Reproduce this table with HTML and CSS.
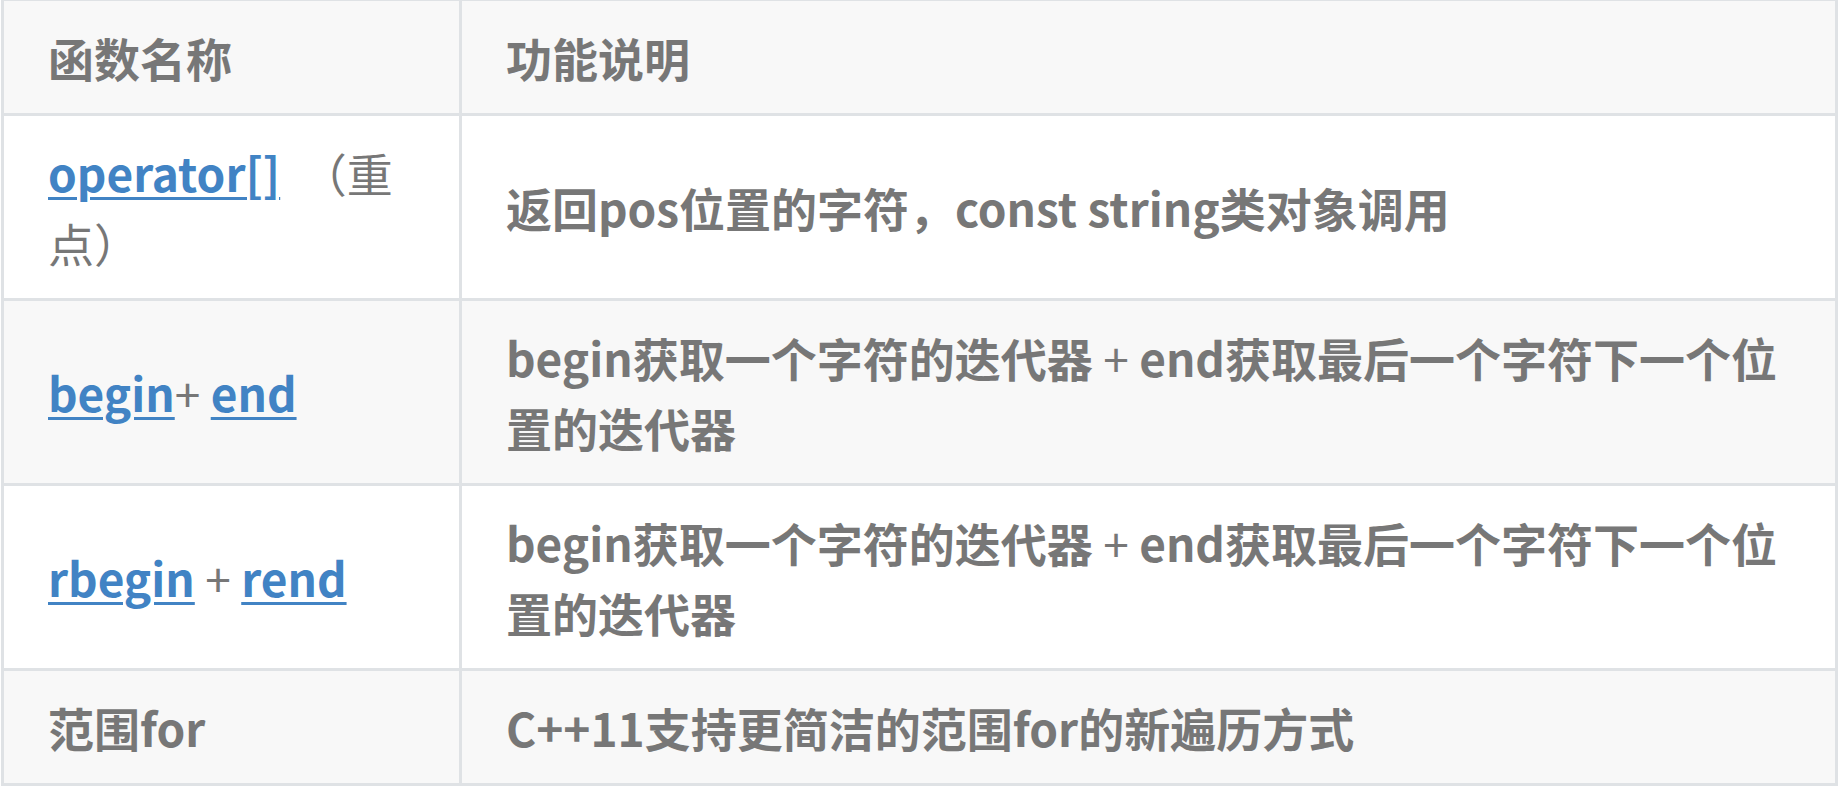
FILE: index.html
```html
<!DOCTYPE html>
<html lang="zh-CN">
<head>
<meta charset="utf-8">
<title>string 迭代器与访问</title>
<link rel="stylesheet" href="styles.css">
</head>
<body>
<table class="fn-table">
  <colgroup>
    <col class="col-name">
    <col class="col-desc">
  </colgroup>
  <thead>
    <tr class="row-head">
      <th>函数名称</th>
      <th>功能说明</th>
    </tr>
  </thead>
  <tbody>
    <tr class="row-odd">
      <td><a class="ref" href="#">operator[]</a> <span class="thin note">（重点）</span></td>
      <td>返回pos位置的字符，const string类对象调用</td>
    </tr>
    <tr class="row-even">
      <td><a class="ref" href="#">begin</a><span class="thin">+</span> <a class="ref" href="#">end</a></td>
      <td>begin获取一个字符的迭代器 <span class="thin">+</span> end获取最后一个字符下一个位置的迭代器</td>
    </tr>
    <tr class="row-odd">
      <td><a class="ref" href="#">rbegin</a> <span class="thin">+</span> <a class="ref" href="#">rend</a></td>
      <td>begin获取一个字符的迭代器 <span class="thin">+</span> end获取最后一个字符下一个位置的迭代器</td>
    </tr>
    <tr class="row-even">
      <td>范围for</td>
      <td>C++11支持更简洁的范围for的新遍历方式</td>
    </tr>
  </tbody>
</table>
</body>
</html>
```
FILE: styles.css
```css
html, body {
  margin: 0;
  padding: 0;
  background: #ffffff;
}

.fn-table {
  margin: -2px 0 0 1px;
  width: 1837px;
  table-layout: fixed;
  border-collapse: separate;
  border-spacing: 0;
  border-top: 3px solid #dfe2e5;
  border-left: 3px solid #dfe2e5;
  font-family: "Noto Sans CJK SC", "Noto Sans", sans-serif;
  font-size: 46px;
  line-height: 70px;
  font-weight: 700;
  color: #777777;
}

.col-name {
  width: 458px;
}

.fn-table th,
.fn-table td {
  padding: 21px 44px;
  border-right: 3px solid #dfe2e5;
  border-bottom: 3px solid #dfe2e5;
  text-align: left;
  vertical-align: middle;
  font-weight: 700;
}

.row-head,
.row-even {
  background: #f8f8f8;
}

.row-odd {
  background: #ffffff;
}

.ref {
  color: #4183c4;
  text-decoration: underline;
  text-decoration-thickness: 3px;
  text-underline-offset: 5px;
}

.thin {
  font-weight: 400;
}

.note {
  margin-left: 10px;
}
```
